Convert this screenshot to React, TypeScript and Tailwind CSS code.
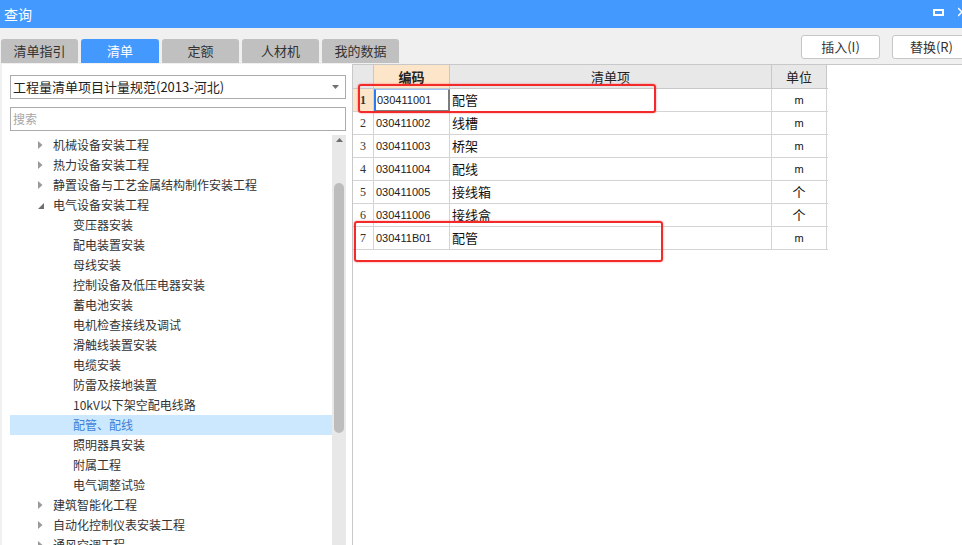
import React from 'react';

type Node = { t: string; l: 1 | 2; a?: 'r' | 'd'; sel?: boolean };

const tree: Node[] = [
  { t: '机械设备安装工程', l: 1, a: 'r' },
  { t: '热力设备安装工程', l: 1, a: 'r' },
  { t: '静置设备与工艺金属结构制作安装工程', l: 1, a: 'r' },
  { t: '电气设备安装工程', l: 1, a: 'd' },
  { t: '变压器安装', l: 2 },
  { t: '配电装置安装', l: 2 },
  { t: '母线安装', l: 2 },
  { t: '控制设备及低压电器安装', l: 2 },
  { t: '蓄电池安装', l: 2 },
  { t: '电机检查接线及调试', l: 2 },
  { t: '滑触线装置安装', l: 2 },
  { t: '电缆安装', l: 2 },
  { t: '防雷及接地装置', l: 2 },
  { t: '10kV以下架空配电线路', l: 2 },
  { t: '配管、配线', l: 2, sel: true },
  { t: '照明器具安装', l: 2 },
  { t: '附属工程', l: 2 },
  { t: '电气调整试验', l: 2 },
  { t: '建筑智能化工程', l: 1, a: 'r' },
  { t: '自动化控制仪表安装工程', l: 1, a: 'r' },
  { t: '通风空调工程', l: 1, a: 'r' },
];

const rows = [
  { n: '1', code: '030411001', name: '配管', unit: 'm' },
  { n: '2', code: '030411002', name: '线槽', unit: 'm' },
  { n: '3', code: '030411003', name: '桥架', unit: 'm' },
  { n: '4', code: '030411004', name: '配线', unit: 'm' },
  { n: '5', code: '030411005', name: '接线箱', unit: '个' },
  { n: '6', code: '030411006', name: '接线盒', unit: '个' },
  { n: '7', code: '030411B01', name: '配管', unit: 'm' },
];

const tabs = ['清单指引', '清单', '定额', '人材机', '我的数据'];

function Arrow({ kind }: { kind?: 'r' | 'd' }) {
  if (kind === 'r')
    return (
      <svg width="5" height="8" viewBox="0 0 5 8" className="ml-[1px]">
        <path d="M0 0 L4.5 4 L0 8 Z" fill="#9a9a9a" />
      </svg>
    );
  if (kind === 'd')
    return (
      <svg width="6" height="6" viewBox="0 0 6 6" className="ml-[1px] mt-[2px]">
        <path d="M6 0 L6 6 L0 6 Z" fill="#6e6e6e" />
      </svg>
    );
  return null;
}

export default function App() {
  return (
    <div className="relative w-[962px] h-[545px] overflow-hidden bg-[#f0f0f0] flex flex-col font-['Noto_Sans_CJK_SC',sans-serif] text-[#222]">
      {/* title bar */}
      <div className="h-[28px] shrink-0 bg-[#4499fe] flex items-center pl-[4px] text-white text-[14px]">
        <span className="flex-1">查询</span>
        <div className="w-[11px] h-[7px] border-2 border-white mr-[14px] mb-[4px]" />
        <svg width="4" height="10" viewBox="0 0 4 10" className="mb-[4px]">
          <path d="M0 1 L4 5 M0 9 L4 5" stroke="white" strokeWidth="1.5" />
        </svg>
      </div>

      {/* toolbar */}
      <div className="h-[36px] shrink-0 flex">
        <div className="flex items-end gap-[3px] pl-[1px] pb-[1px] flex-1">
          {tabs.map((t, i) => (
            <div
              key={t}
              className={
                i === 1
                  ? 'w-[78px] h-[24px] rounded-t-[3px] bg-[#4499fe] text-white text-[13px] flex items-center justify-center'
                  : 'w-[77px] h-[24px] rounded-t-[3px] bg-[#c0c0c0] text-[#333] text-[13px] flex items-center justify-center'
              }
            >
              {t}
            </div>
          ))}
        </div>
        <div className="flex gap-[12px] pt-[7px]">
          <button className="w-[79px] h-[24px] bg-white border border-[#c6c6c6] rounded-[3px] text-[13px] text-[#333]">插入(I)</button>
          <button className="w-[79px] h-[24px] bg-white border border-[#c6c6c6] rounded-[3px] text-[13px] text-[#333] mr-[-9px]">替换(R)</button>
        </div>
      </div>

      {/* main */}
      <div className="flex-1 flex pl-[2px] min-h-0">
        {/* left panel */}
        <div className="w-[350px] bg-white flex flex-col pt-[11px] pl-[8px]">
          <div className="w-[336px] h-[24px] border border-[#ababab] flex items-center pl-[2px] pr-[6px] text-[13px] text-[#222]">
            <span className="flex-1">工程量清单项目计量规范(2013-河北)</span>
            <svg width="7" height="4" viewBox="0 0 7 4">
              <path d="M0 0 L7 0 L3.5 4 Z" fill="#707070" />
            </svg>
          </div>
          <div className="w-[336px] h-[24px] mt-[8px] border border-[#ababab] flex items-center pl-[2px] text-[12px] text-[#a6a6a6]">
            搜索
          </div>
          <div className="flex-1 mt-[4px] flex w-[336px] min-h-0">
            <div className="w-[322px] flex flex-col">
              {tree.map((n) => (
                <div
                  key={n.t}
                  className={
                    (n.sel ? 'bg-[#cce8ff] text-[#3d7fd6] ' : 'text-[#333] ') +
                    (n.l === 1 ? 'pl-[27px] ' : 'pl-[63px] ') +
                    'h-[20px] shrink-0 flex items-center text-[12px] whitespace-nowrap'
                  }
                >
                  {n.l === 1 && (
                    <span className="w-[16px] flex items-center">
                      <Arrow kind={n.a} />
                    </span>
                  )}
                  {n.t}
                </div>
              ))}
            </div>
            <div className="w-[14px] bg-[#e8e8e8] flex flex-col items-center">
              <svg width="7" height="4" viewBox="0 0 7 4" className="mt-[3px]">
                <path d="M3.5 0 L7 4 L0 4 Z" fill="#6f6f6f" />
              </svg>
              <div className="w-[10px] h-[250px] mt-[41px] rounded-full bg-[#bdbdbd]" />
            </div>
          </div>
        </div>

        {/* right panel */}
        <div className="flex-1 bg-white border-l border-t border-[#c8c8c8]">
          <div className="flex h-[24px] border-b border-[#c8c8c8] w-[475px] text-[13px]">
            <div className="w-[21px] bg-[#e8e8e8] border-r border-[#c8c8c8]" />
            <div className="w-[76px] bg-[#fde5c9] border-r border-[#c8c8c8] flex items-center justify-center font-bold text-[#222]">编码</div>
            <div className="w-[322px] bg-[#e8e8e8] border-r border-[#c8c8c8] flex items-center justify-center">清单项</div>
            <div className="w-[55px] bg-[#e8e8e8] border-r border-[#c8c8c8] flex items-center justify-center">单位</div>
          </div>
          {rows.map((r, i) => (
            <div key={r.n} className="flex h-[23px] border-b border-[#d4d4d4] w-[475px]">
              <div
                className={
                  (i === 0 ? 'bg-[#fde5c9] font-bold ' : '') +
                  "w-[21px] border-r border-[#d4d4d4] flex items-center justify-center font-['Liberation_Serif',serif] text-[12px] text-[#333]"
                }
              >
                {r.n}
              </div>
              <div
                className={
                  (i === 0
                    ? 'border-l-2 border-l-[#2a7bf0] border-r-2 border-r-[#7d7d7d] border-b-2 border-b-[#7d7d7d] border-t border-t-[#9cc4f6] -mb-[1px] pl-[1px] '
                    : 'border-r border-[#d4d4d4] pl-[2px] ') +
                  "w-[76px] flex items-center font-['Liberation_Sans',sans-serif] text-[11px] text-[#222]"
                }
              >
                {r.code}
              </div>
              <div className="w-[322px] border-r border-[#d4d4d4] flex items-center pl-[2px] text-[13px] text-[#111]">{r.name}</div>
              <div
                className={
                  (r.unit === 'm' ? "font-['Liberation_Sans',sans-serif] text-[11px] " : 'text-[13px] ') +
                  'w-[55px] border-r border-[#d4d4d4] flex items-center justify-center text-[#111]'
                }
              >
                {r.unit}
              </div>
            </div>
          ))}
        </div>
      </div>

      {/* annotation boxes */}
      <div className="absolute left-[358px] top-[84px] w-[298px] h-[29px] border-2 border-[#f22a2a] rounded-[3px] shadow-[0_0_2px_rgba(255,0,0,0.5)]" />
      <div className="absolute left-[354px] top-[221px] w-[309px] h-[41px] border-2 border-[#f22a2a] rounded-[3px] shadow-[0_0_2px_rgba(255,0,0,0.5)]" />
    </div>
  );
}
